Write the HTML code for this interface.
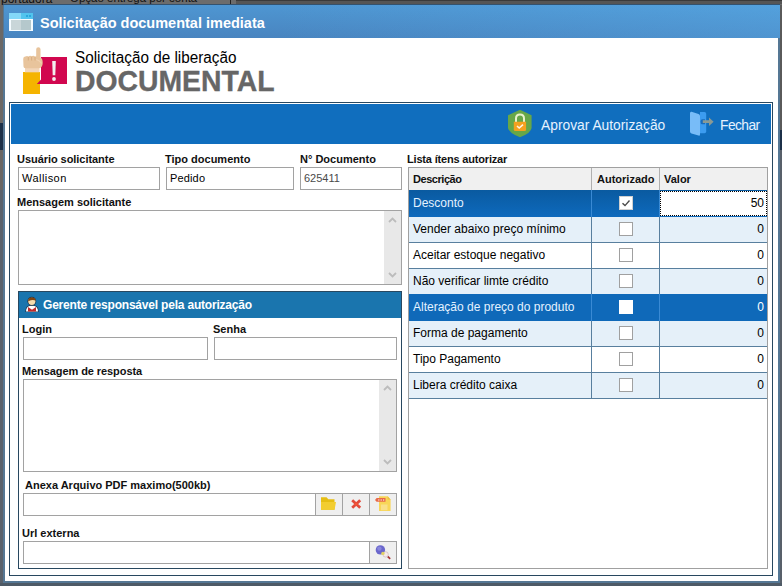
<!DOCTYPE html>
<html><head><meta charset="utf-8">
<style>
*{margin:0;padding:0;box-sizing:border-box}
html,body{width:782px;height:586px;overflow:hidden;background:#585858}
body{position:relative;font-family:"Liberation Sans",sans-serif;color:#000}
.a{position:absolute}
.t{position:absolute;white-space:nowrap;line-height:1}
.lbl{font-weight:bold;font-size:11px;color:#111}
.tb{position:absolute;background:#fff;border:1px solid #a2a2a2}
.row{position:absolute;left:409px;width:358px;height:26px}
.cell{position:absolute;top:0;height:26px;font-size:12px}
.cb{position:absolute;left:210px;top:6px;width:14px;height:14px;background:#fff;border:1px solid #8a8a8a}
</style></head><body>
<!-- background strip -->
<div class="a" style="left:0;top:0;width:782px;height:5px;background:#6c6c6c"></div>
<div class="a" style="left:236px;top:0;width:546px;height:4px;background:linear-gradient(#3a3a3a 0,#3a3a3a 1.5px,#555 1.5px)"></div>
<div class="t" style="left:1px;top:-7px;font-size:12px;color:#111">portadora</div><div class="t" style="left:70px;top:-7px;font-size:11.5px;color:#111">Opção entrega por conta</div>
<div class="a" style="left:230px;top:0;width:1px;height:4px;background:#222"></div>
<div class="a" style="left:0;top:5px;width:4px;height:581px;background:linear-gradient(#6b6866 0,#6b6866 118px,#1c3048 118px,#1c3048 145px,#696664 145px,#696664 185px,#5a626c 185px)"></div>
<div class="a" style="left:780px;top:5px;width:2px;height:581px;background:linear-gradient(#5a5a5a 0,#5a5a5a 125px,#1c3048 125px,#1c3048 145px,#58606a 145px)"></div>
<div class="a" style="left:0;top:583px;width:782px;height:3px;background:#4e5a66"></div>

<!-- window -->
<div class="a" style="left:3px;top:4px;width:777px;height:579px;background:#557794"></div>
<div class="a" style="left:4px;top:5px;width:776px;height:33px;background:linear-gradient(90deg,rgba(95,185,245,0) 35%,rgba(95,185,245,0.3) 100%),linear-gradient(#4e96d2,#4985c0)"></div>
<div class="a" style="left:3px;top:4px;width:777px;height:1px;background:#34526e"></div>
<div class="a" style="left:5px;top:38px;width:773px;height:543px;background:#fff"></div>

<!-- title icon -->
<div class="a" style="left:9px;top:13px;width:24px;height:18px;background:#f4fbff"></div>
<div class="a" style="left:9px;top:13px;width:12px;height:6px;background:#84d8f8"></div>
<div class="a" style="left:21px;top:13px;width:12px;height:6px;background:#52c4ee"></div>
<div class="a" style="left:26px;top:15px;width:2px;height:2px;background:#2aa8de"></div>
<div class="a" style="left:29px;top:15px;width:2px;height:2px;background:#2aa8de"></div>
<div class="a" style="left:11px;top:20px;width:10px;height:10px;background:#c9d6d9"></div>
<div class="a" style="left:21px;top:20px;width:10px;height:10px;background:#b5c8cc"></div>
<div class="t" style="left:40px;top:16px;font-size:14.5px;font-weight:bold;color:#fff">Solicitação documental imediata</div>

<!-- header logo -->
<div class="t" style="left:75px;top:50px;font-size:16px;color:#000;transform:scaleX(0.955);transform-origin:0 0">Solicitação de liberação</div>
<div class="t" style="left:75px;top:66px;font-size:30px;font-weight:bold;color:#666;-webkit-text-stroke:0.35px #666;transform:scaleX(0.945);transform-origin:0 0">DOCUMENTAL</div>

<!-- outer panel -->
<div class="a" style="left:9px;top:102px;width:764px;height:474px;border:1px solid #284860"></div>
<div class="a" style="left:11px;top:104px;width:760px;height:40px;background:#106ebe"></div>
<div class="t" style="left:541px;top:119px;font-size:13.8px;color:#e6f2ff">Aprovar Autorização</div>
<div class="t" style="left:720px;top:119px;font-size:13.8px;letter-spacing:-0.55px;color:#e6f2ff">Fechar</div>

<!-- left form -->
<div class="t lbl" style="left:17px;top:154px;letter-spacing:-0.05px">Usuário solicitante</div>
<div class="t lbl" style="left:165px;top:154px">Tipo documento</div>
<div class="t lbl" style="left:300px;top:154px">N° Documento</div>
<div class="tb" style="left:18px;top:167px;width:142px;height:23px"></div>
<div class="tb" style="left:166px;top:167px;width:128px;height:23px"></div>
<div class="tb" style="left:300px;top:167px;width:102px;height:23px"></div>
<div class="t" style="left:22px;top:173px;font-size:11px;letter-spacing:0.45px;color:#000">Wallison</div>
<div class="t" style="left:170px;top:173px;font-size:11px;letter-spacing:0.15px;color:#000">Pedido</div>
<div class="t" style="left:304px;top:173px;font-size:11px;color:#4a4a4a">625411</div>

<div class="t lbl" style="left:17px;top:197px">Mensagem solicitante</div>
<div class="tb" style="left:18px;top:210px;width:384px;height:75px"></div>
<div class="a" style="left:384px;top:211px;width:17px;height:73px;background:#e8e8e8"></div>

<!-- gerente panel -->
<div class="a" style="left:18px;top:291px;width:384px;height:278px;border:1px solid #284860"></div>
<div class="a" style="left:19px;top:292px;width:382px;height:26px;background:#1a75ae"></div>
<div class="t" style="left:43px;top:299px;font-size:12px;letter-spacing:-0.2px;font-weight:bold;color:#fff">Gerente responsável pela autorização</div>
<div class="t lbl" style="left:22px;top:324px">Login</div>
<div class="t lbl" style="left:213px;top:324px">Senha</div>
<div class="tb" style="left:23px;top:337px;width:185px;height:23px"></div>
<div class="tb" style="left:214px;top:337px;width:183px;height:23px"></div>
<div class="t lbl" style="left:22px;top:366px;letter-spacing:-0.08px">Mensagem de resposta</div>
<div class="tb" style="left:23px;top:379px;width:374px;height:93px"></div>
<div class="a" style="left:379px;top:380px;width:17px;height:91px;background:#e8e8e8"></div>
<svg class="a" style="left:379px;top:380px" width="17" height="91"><path d="M5 10 L8.5 6.5 L12 10" fill="none" stroke="#bcbcbc" stroke-width="1.8"/><path d="M5 80 L8.5 83.5 L12 80" fill="none" stroke="#bcbcbc" stroke-width="1.8"/></svg>
<div class="t lbl" style="left:25px;top:480px">Anexa Arquivo PDF maximo(500kb)</div>
<div class="tb" style="left:23px;top:493px;width:374px;height:23px"></div>
<div class="t lbl" style="left:22px;top:528px">Url externa</div>
<div class="tb" style="left:23px;top:541px;width:374px;height:23px"></div>

<!-- right grid -->
<div class="t lbl" style="left:407px;top:154px;letter-spacing:-0.18px">Lista ítens autorizar</div>
<div class="a" style="left:408px;top:167px;width:360px;height:402px;border:1px solid #a0a0a0;background:#fff"></div>
<div class="a" style="left:409px;top:168px;width:358px;height:22px;background:#f0f0f0"></div>

<!-- grid -->
<div class="a" style="left:409px;top:168px;width:358px;height:22px;background:#f0f0f0"></div>
<div class="a" style="left:591px;top:168px;width:1px;height:22px;background:#b0b0b0"></div>
<div class="a" style="left:659px;top:168px;width:1px;height:22px;background:#b0b0b0"></div>
<div class="t" style="left:413px;top:174px;font-size:11px;letter-spacing:-0.45px;font-weight:bold;color:#111">Descrição</div>
<div class="t" style="left:597px;top:174px;font-size:11px;font-weight:bold;color:#111">Autorizado</div>
<div class="t" style="left:664px;top:174px;font-size:11px;font-weight:bold;color:#111">Valor</div>
<div class="a" style="left:409px;top:217px;width:358px;height:25px;background:#e5f0f9"></div>
<div class="a" style="left:409px;top:243px;width:358px;height:25px;background:#ffffff"></div>
<div class="a" style="left:409px;top:269px;width:358px;height:25px;background:#e5f0f9"></div>
<div class="a" style="left:409px;top:321px;width:358px;height:25px;background:#e5f0f9"></div>
<div class="a" style="left:409px;top:347px;width:358px;height:25px;background:#ffffff"></div>
<div class="a" style="left:409px;top:373px;width:358px;height:25px;background:#e5f0f9"></div>
<div class="a" style="left:409px;top:216px;width:358px;height:1px;background:#587f9e"></div>
<div class="a" style="left:409px;top:242px;width:358px;height:1px;background:#587f9e"></div>
<div class="a" style="left:409px;top:268px;width:358px;height:1px;background:#587f9e"></div>
<div class="a" style="left:409px;top:294px;width:358px;height:1px;background:#587f9e"></div>
<div class="a" style="left:409px;top:320px;width:358px;height:1px;background:#587f9e"></div>
<div class="a" style="left:409px;top:346px;width:358px;height:1px;background:#587f9e"></div>
<div class="a" style="left:409px;top:372px;width:358px;height:1px;background:#587f9e"></div>
<div class="a" style="left:409px;top:398px;width:358px;height:1px;background:#587f9e"></div>
<div class="a" style="left:591px;top:190px;width:1px;height:209px;background:#587f9e"></div>
<div class="a" style="left:659px;top:190px;width:1px;height:209px;background:#587f9e"></div>
<div class="a" style="left:409px;top:190px;width:358px;height:27px;background:linear-gradient(#0a5aa0,#0e6abd)"></div>
<div class="a" style="left:591px;top:190px;width:1px;height:27px;background:#3a8ad4"></div>
<div class="a" style="left:659px;top:190px;width:1px;height:27px;background:#3a8ad4"></div>
<div class="a" style="left:409px;top:294px;width:358px;height:27px;background:#0f69b9"></div>
<div class="a" style="left:591px;top:294px;width:1px;height:27px;background:#3a8ad4"></div>
<div class="a" style="left:659px;top:294px;width:1px;height:27px;background:#3a8ad4"></div>
<div class="t" style="left:413px;top:197px;font-size:12px;color:#e4f2ff">Desconto</div>
<div class="a" style="left:660px;top:191px;width:107px;height:25px;background:#fff;border:1px dotted #000"></div>
<div class="t" style="left:660px;width:104px;text-align:right;top:197px;font-size:12px;color:#000">50</div>
<div class="a" style="left:619px;top:196px;width:14px;height:14px;background:#fff;border:1px solid #d0d0d0"></div>
<svg class="a" style="left:619px;top:196px" width="14" height="14"><path d="M3.5 7.2 L6 9.6 L10.5 4.5" fill="none" stroke="#4a4a4a" stroke-width="1.4"/></svg>
<div class="t" style="left:413px;top:223px;font-size:12px;color:#000">Vender abaixo preço mínimo</div>
<div class="t" style="left:660px;width:104px;text-align:right;top:223px;font-size:12px;color:#000">0</div>
<div class="a" style="left:619px;top:222px;width:14px;height:14px;background:#fff;border:1px solid #a0a0a0"></div>
<div class="t" style="left:413px;top:249px;font-size:12px;color:#000">Aceitar estoque negativo</div>
<div class="t" style="left:660px;width:104px;text-align:right;top:249px;font-size:12px;color:#000">0</div>
<div class="a" style="left:619px;top:248px;width:14px;height:14px;background:#fff;border:1px solid #a0a0a0"></div>
<div class="t" style="left:413px;top:275px;font-size:12px;color:#000">Não verificar limte crédito</div>
<div class="t" style="left:660px;width:104px;text-align:right;top:275px;font-size:12px;color:#000">0</div>
<div class="a" style="left:619px;top:274px;width:14px;height:14px;background:#fff;border:1px solid #a0a0a0"></div>
<div class="t" style="left:413px;top:301px;font-size:12px;color:#e4f2ff">Alteração de preço do produto</div>
<div class="t" style="left:660px;width:104px;text-align:right;top:301px;font-size:12px;color:#fff">0</div>
<div class="a" style="left:619px;top:300px;width:14px;height:14px;background:#fff;border:1px solid #fff"></div>
<div class="t" style="left:413px;top:327px;font-size:12px;color:#000">Forma de pagamento</div>
<div class="t" style="left:660px;width:104px;text-align:right;top:327px;font-size:12px;color:#000">0</div>
<div class="a" style="left:619px;top:326px;width:14px;height:14px;background:#fff;border:1px solid #a0a0a0"></div>
<div class="t" style="left:413px;top:353px;font-size:12px;color:#000">Tipo Pagamento</div>
<div class="t" style="left:660px;width:104px;text-align:right;top:353px;font-size:12px;color:#000">0</div>
<div class="a" style="left:619px;top:352px;width:14px;height:14px;background:#fff;border:1px solid #a0a0a0"></div>
<div class="t" style="left:413px;top:379px;font-size:12px;color:#000">Libera crédito caixa</div>
<div class="t" style="left:660px;width:104px;text-align:right;top:379px;font-size:12px;color:#000">0</div>
<div class="a" style="left:619px;top:378px;width:14px;height:14px;background:#fff;border:1px solid #a0a0a0"></div>
<!-- /grid -->
<div class="a" style="left:315px;top:493px;width:28px;height:23px;background:#efefef;border:1px solid #a2a2a2"></div>
<div class="a" style="left:342px;top:493px;width:28px;height:23px;background:#efefef;border:1px solid #a2a2a2"></div>
<div class="a" style="left:369px;top:493px;width:28px;height:23px;background:#efefef;border:1px solid #a2a2a2"></div>
<div class="a" style="left:369px;top:541px;width:28px;height:23px;background:#efefef;border:1px solid #a2a2a2"></div>
<svg class="a" style="left:384px;top:211px" width="17" height="73"><path d="M5 11 L8.5 7.5 L12 11" fill="none" stroke="#bcbcbc" stroke-width="1.8"/><path d="M5 62 L8.5 65.5 L12 62" fill="none" stroke="#bcbcbc" stroke-width="1.8"/></svg>
<svg class="a" style="left:0;top:0" width="782" height="586" viewBox="0 0 782 586">
<!-- logo -->
<path d="M23 72 H40 V94 H23 Z" fill="#f5b400"/>
<path d="M41 57 H67 V84 H36.8 L41 79.5 Z" fill="#d1074f"/>
<path d="M52.2 61 H55.8 L55.3 75.3 H52.7 Z" fill="#f2eeee"/>
<circle cx="54" cy="79" r="1.9" fill="#f2eeee"/>
<path d="M25 68 H39.5 V72.3 H25 Z" fill="#f2d5b8"/>
<path d="M23.5 66.5 L23.2 59 Q23.2 56.2 25.5 56.5 Q27 55.4 28.5 56.5 Q30 55.3 31.6 56.3 Q33.3 55.2 35 56.5 L36.2 56.2 V49.3 Q36.2 47.3 38.35 47.3 Q40.5 47.3 40.5 49.3 V57.5 Q42.7 58.5 42.7 62.5 Q42.7 67.8 39 68.3 H25.5 Q23.5 68.3 23.5 66.5 Z" fill="#e8c49c"/>
<path d="M28.3 57 V60.5 M31.6 56.8 V60.5 M35 57 V60.5" stroke="#d4a77a" stroke-width="0.8"/>
<path d="M36.2 59.5 Q39 60 41.8 63.5" fill="none" stroke="#f0d2b0" stroke-width="1.2"/>
<!-- shield lock -->
<path d="M520 109.7 L531.6 115.2 V128 Q531 133 520 137.3 Q509 133 508 128 V115.2 Z" fill="#67a748"/>
<path d="M516 122 V118.5 Q516 114.5 520 114.5 Q524 114.5 524 118.5 V122" fill="none" stroke="#e9f2cc" stroke-width="2"/>
<path d="M513.8 121.7 H526.1 V129.5 Q526.1 131 524.5 131 H515.4 Q513.8 131 513.8 129.5 Z" fill="#f5a11e"/>
<path d="M517 126 L519.2 128 L523 124.6" fill="none" stroke="#fff4e0" stroke-width="1.6"/>
<!-- door -->
<path d="M700 112 H704.5 Q706.2 112 706.2 113.8 V131.5 Q706.2 133.2 704.5 133.2 H700 Z" fill="#3c9cf0"/>
<path d="M691.5 111.8 L698.5 114 Q700 114.5 700 116 V134.5 Q700 136 698.5 135.6 L691.5 133.4 Q690 133 690 131.5 V113.3 Q690 111.5 691.5 111.8 Z" fill="#78bcf8"/>
<path d="M702 119.2 H705 V124.2 H702 Q700.5 124.2 700.5 121.7 Q700.5 119.2 702 119.2 Z" fill="#1a6cbc"/>
<path d="M702.8 120.3 H709 V117.4 L713.6 121.7 L709 126 V123.1 H702.8 Z" fill="#8a9a94"/>
<!-- person -->
<path d="M25.3 312 Q25.3 305.5 30.5 305 H33.5 Q38.7 305.5 38.7 312 Z" fill="#1c2c3c" opacity="0.85"/>
<path d="M26 311.6 Q26 306.2 30.8 305.8 H33.2 Q38 306.2 38 311.6 Z" fill="#fff"/>
<path d="M28 311.6 V307 L32 309.8 L36 307 V311.6 Z" fill="#c02a2a"/>
<path d="M29.5 306 L32 308.6 L34.5 306" fill="none" stroke="#fff" stroke-width="1"/>
<circle cx="31.8" cy="301.2" r="4.4" fill="#1c2c3c" opacity="0.85"/>
<circle cx="31.8" cy="301.3" r="3.6" fill="#f6dcae"/>
<path d="M28.2 301.5 Q27.8 297.4 31.8 297.4 Q35.8 297.4 35.6 300.6 Q33.5 299.4 30.8 300.2 Q29.4 300.6 28.2 301.5 Z" fill="#83440e"/>
<!-- folder -->
<path d="M321 497.3 H326.5 L328.3 499.3 H334.5 V509.8 H321 Z" fill="#e6be14"/>
<path d="M321 502 H336 L334.6 509.8 H321 Z" fill="#f2cd30"/>
<!-- red X -->
<path d="M352.2 500.3 L360.2 507.8 M360.2 500.3 L352.2 507.8" stroke="#e24a3a" stroke-width="2.8"/>
<circle cx="356.2" cy="504" r="1.6" fill="#f45434"/>
<!-- file -->
<path d="M379 496.2 H387.6 L390.6 499.4 V510.9 H379 Z" fill="#f8d658"/>
<path d="M387.6 496.2 V499.4 H390.6 Z" fill="#e8c040"/>
<path d="M381 504.5 H387.5 V510.2 H381 Z" fill="#f9e08a"/>
<path d="M376.6 498.1 H385.5 V501.8 H376.6 L375 500 Z" fill="#e86a48"/>
<path d="M378.2 499.4 h1.2 v1.2 h-1.2 Z M380.6 499.4 h1.2 v1.2 h-1.2 Z M383 499.4 h1.2 v1.2 h-1.2 Z" fill="#fff"/>
<!-- globe search -->
<circle cx="380.4" cy="549.9" r="4.7" fill="#6a66cc"/>
<circle cx="379.4" cy="548.6" r="2.2" fill="#8886dc"/>
<path d="M387.6 556.4 L390.2 558.8" stroke="#a83434" stroke-width="1.7"/>
<circle cx="385.6" cy="554.4" r="2.7" fill="#f6eaea" stroke="#c8b0b0" stroke-width="0.6"/>
<circle cx="382.9" cy="553.4" r="1.7" fill="#e2d264"/>
</svg>
</body></html>
